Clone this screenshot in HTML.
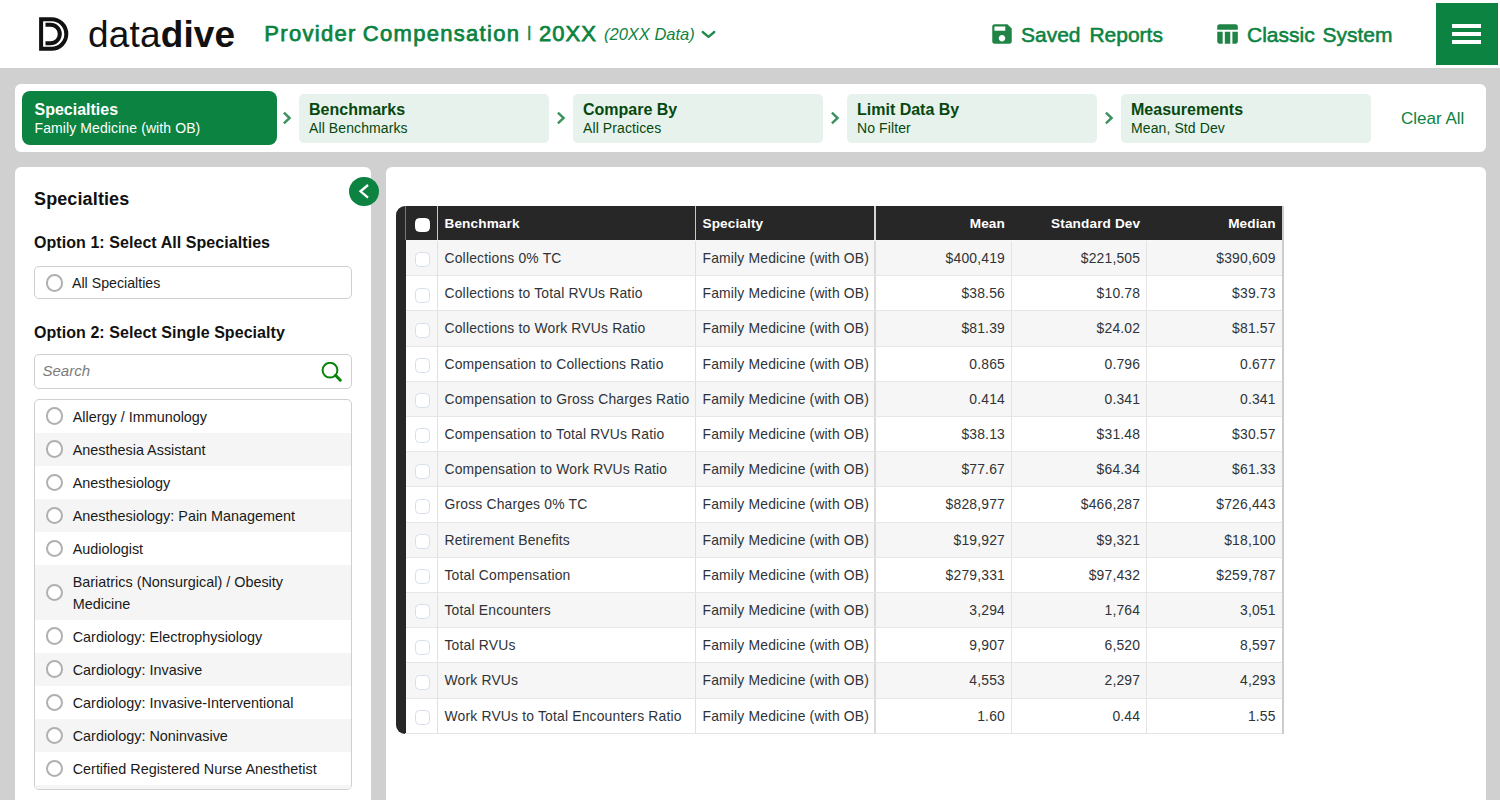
<!DOCTYPE html>
<html lang="en">
<head>
<meta charset="utf-8">
<title>datadive - Provider Compensation</title>
<style>
*{box-sizing:border-box;margin:0;padding:0}
html,body{width:1500px;height:800px;overflow:hidden}
body{background:#d0d0d0;font-family:"Liberation Sans",Arial,sans-serif;color:#222;position:relative}
.abs{position:absolute}
.t{position:absolute;white-space:nowrap;line-height:1}
/* header */
#hdr{position:absolute;left:0;top:0;width:1500px;height:68px;background:#fff}
.g{color:#0c8341}
#burger{position:absolute;left:1436px;top:3px;width:62px;height:62px;background:#0c8341}
#burger i{position:absolute;left:16px;width:29px;height:3.6px;background:#fff}
/* nav */
#nav{position:absolute;left:15px;top:84px;width:1471px;height:68px;background:#fff;border-radius:6px}
.pill{position:absolute;top:10px;width:250px;height:48.5px;background:#e7f2ec;border-radius:5px;color:#06480f}
.pill b{position:absolute;left:10px;top:8px;font-size:16px;line-height:16px;white-space:nowrap}
.pill span{position:absolute;left:10px;top:25.5px;letter-spacing:.1px;font-size:14px;line-height:16px;white-space:nowrap}
.pill.on{left:7px;top:7px;width:255px;height:54px;background:#0c8341;color:#fff;border-radius:8px}
.pill.on b{left:12.5px;top:11px}
.pill.on span{left:12.5px;top:28.5px}
.chev{position:absolute;top:27px;width:9px;height:14px}
/* cards */
#side{position:absolute;left:15px;top:167px;width:356px;height:640px;background:#fff;border-radius:6px}
#main{position:absolute;left:386px;top:167px;width:1100px;height:640px;background:#fff;border-radius:6px}

/* sidebar */
#side h2{letter-spacing:.12px;position:absolute;left:19px;top:19.8px;font-size:18px;line-height:24px;font-weight:bold;color:#111;white-space:nowrap}
#side h3{letter-spacing:.06px;position:absolute;left:19px;font-size:16px;line-height:20px;font-weight:bold;color:#111;white-space:nowrap}
.box{position:absolute;left:19px;width:318px;border:1px solid #cfcfcf;border-radius:5px;background:#fff}
.radio{position:absolute;left:10.8px;width:17.2px;height:17.2px;border-radius:50%;border:2px solid #b0b0b0;background:#fff}
#list{overflow:hidden;top:231.5px;height:391.5px;padding:0}
#list .r{position:relative;padding:7.45px 8px 4.05px 37.7px;font-size:14.4px;line-height:21.6px;color:#1a1a1a;min-height:33px}
#list .r:nth-child(even){background:#f5f5f5}
#list .r .radio{top:50%;margin-top:-8.7px}
#collapse{position:absolute;left:334px;top:9.6px;width:30px;height:29.5px;border-radius:50%;background:#0c8341}

/* table */
#tbl{position:absolute;left:10px;top:39px;width:888px;height:527.6px;background:#272727;border-radius:9px 0 0 9px;overflow:hidden;border-right:2px solid #cdcdcd}
#tbl .hd{position:absolute;left:9px;top:0;right:0;height:34px;color:#fff;font-weight:bold;font-size:13.6px}
#tbl .row{position:absolute;left:9px;right:0;height:35.2px;background:#fff;border-bottom:1px solid #e6e6e6;font-size:13.9px;color:#2f3337}
#tbl .row.o{background:#f6f6f6}
#tbl .c{position:absolute;top:0;bottom:0;white-space:nowrap;line-height:35px;letter-spacing:.18px}
#tbl .hd .c{line-height:35.5px;letter-spacing:.12px}
.c0{left:0;width:31.5px;border-left:1px solid #777}
.row .c0{border-left:1px solid #272727;bottom:-1px !important}
.c1{left:31.5px;width:258.5px;border-left:1px solid #e0e0e0;padding-left:7px}
.c2{left:290px;width:178px;border-left:1px solid #e0e0e0;padding-left:6.5px}
.c3{left:468.7px;width:137.3px;border-left:2.5px solid #dcdcdc;text-align:right;padding-right:6px}
.c4{left:606px;width:135.2px;border-left:1px solid #e4e4e4;text-align:right;padding-right:6px}
.c5{left:741.2px;width:135.8px;border-left:1px solid #e4e4e4;text-align:right;padding-right:6.3px}
.hd .c1,.hd .c2{border-left-color:#c9c9c9}
.hd .c3{border-left-color:#d6d6d6}
.hd .c4,.hd .c5{border-left-color:transparent}
.cb{position:absolute;left:8.5px;top:11.4px;width:15.4px;height:15px;border-radius:4.5px;background:#fff;border:1px solid #d8dee8}
.hd .cb{top:11.5px;left:8.5px;width:15px;height:14.8px;border-color:#fff}
</style>
</head>
<body>
<div id="hdr">
  <svg class="abs" style="left:39px;top:17px" width="30" height="34" viewBox="0 0 30 34">
    <path d="M2.1 2.2H12.5A14.8 14.8 0 0 1 12.5 31.8H2.1Z" fill="none" stroke="#111" stroke-width="4"/>
    <path d="M6.5 7.7H11.5A9.3 9.3 0 0 1 11.5 26.3H6.5" fill="none" stroke="#111" stroke-width="4"/>
  </svg>
  <div class="t" id="logo" style="left:88px;top:14px;font-size:37px;line-height:42px;color:#111;letter-spacing:.15px">data<b>dive</b></div>
  <div class="t g" id="title" style="left:264.3px;top:21px;font-size:22px;line-height:26px;-webkit-text-stroke:.75px #0c8341;letter-spacing:1.3px;word-spacing:-1.2px">Provider Compensation</div>
  <div class="t g" id="bar" style="left:527.2px;top:22px;font-size:15px;line-height:20px;-webkit-text-stroke:.6px #0c8341">|</div>
  <div class="t g" id="yr" style="left:539px;top:21px;font-size:22px;line-height:26px;-webkit-text-stroke:.75px #0c8341;letter-spacing:1.05px">20XX</div>
  <div class="t g" id="yrd" style="left:604px;top:24px;font-size:16.5px;line-height:20px;font-style:italic">(20XX Data)</div>
  <svg class="abs" style="left:701px;top:30px" width="15" height="9" viewBox="0 0 15 9"><path d="M1.7 2L7.5 6.8L13.3 2" fill="none" stroke="#1f8a4c" stroke-width="2.3" stroke-linecap="round" stroke-linejoin="round"/></svg>

  <svg class="abs" style="left:989px;top:21px" width="26" height="26" viewBox="0 0 24 24"><path fill="#1f8444" d="M17 3H5c-1.11 0-2 .9-2 2v14c0 1.1.89 2 2 2h14c1.1 0 2-.9 2-2V7l-4-4zm-5 16c-1.66 0-3-1.34-3-3s1.34-3 3-3 3 1.34 3 3-1.34 3-3 3zm3-10H5V5h10v4z"/></svg>
  <div class="t g" id="saved" style="left:1021px;top:22px;font-size:21px;line-height:26px;word-spacing:3px;-webkit-text-stroke:.55px #0c8341">Saved Reports</div>
  <svg class="abs" style="left:1214px;top:21px" width="26" height="26" viewBox="0 0 24 24"><path fill="#1f8444" d="M10 10.02h5V21h-5zM17 21h3c1.1 0 2-.9 2-2v-9h-5v11zm3-18H5c-1.1 0-2 .9-2 2v3h19V5c0-1.1-.9-2-2-2zM3 19c0 1.1.9 2 2 2h3V10H3v9z"/></svg>
  <div class="t g" id="classic" style="left:1247px;top:22px;font-size:21px;line-height:26px;word-spacing:2px;-webkit-text-stroke:.55px #0c8341">Classic System</div>
  <div id="burger"><i style="top:21.2px"></i><i style="top:29.2px"></i><i style="top:37.2px"></i></div>
</div>

<div id="nav">
  <div class="pill on"><b>Specialties</b><span>Family Medicine (with OB)</span></div>
  <svg class="chev" style="left:268px" viewBox="0 0 9 14"><path d="M0.9 1.7L6.6 7L0.9 12.3" fill="none" stroke="#3c915f" stroke-width="2.4"/></svg>
  <div class="pill" style="left:284px"><b>Benchmarks</b><span>All Benchmarks</span></div>
  <svg class="chev" style="left:542px" viewBox="0 0 9 14"><path d="M0.9 1.7L6.6 7L0.9 12.3" fill="none" stroke="#3c915f" stroke-width="2.4"/></svg>
  <div class="pill" style="left:558px"><b>Compare By</b><span>All Practices</span></div>
  <svg class="chev" style="left:816px" viewBox="0 0 9 14"><path d="M0.9 1.7L6.6 7L0.9 12.3" fill="none" stroke="#3c915f" stroke-width="2.4"/></svg>
  <div class="pill" style="left:832px"><b>Limit Data By</b><span>No Filter</span></div>
  <svg class="chev" style="left:1090px" viewBox="0 0 9 14"><path d="M0.9 1.7L6.6 7L0.9 12.3" fill="none" stroke="#3c915f" stroke-width="2.4"/></svg>
  <div class="pill" style="left:1106px"><b>Measurements</b><span>Mean, Std Dev</span></div>
  <div class="t g" id="clear" style="left:1386px;top:25px;font-size:17px;line-height:20px">Clear All</div>
</div>

<div id="side">

  <h2>Specialties</h2>
  <h3 style="top:65.7px">Option 1: Select All Specialties</h3>
  <div class="box" style="top:98.9px;height:33.6px"><div class="radio" style="top:7.5px"></div><div class="t" id="allspec" style="left:37px;top:8px;font-size:14.2px;line-height:16px;color:#1a1a1a">All Specialties</div></div>
  <h3 style="top:155.5px">Option 2: Select Single Specialty</h3>
  <div class="box" style="top:187.2px;height:34.5px"><div class="t" id="search" style="left:7.5px;top:8px;font-size:15px;line-height:16px;font-style:italic;color:#7b7b7b">Search</div>
    <svg class="abs" style="left:286px;top:7px" width="22" height="21" viewBox="0 0 22 21"><circle cx="9" cy="8.2" r="7.4" fill="none" stroke="#078407" stroke-width="2"/><path d="M14.5 13.3L19.3 18.2" stroke="#078407" stroke-width="3" stroke-linecap="round"/></svg>
  </div>
  <div class="box" id="list">
    <div class="r"><div class="radio"></div>Allergy / Immunology</div>
    <div class="r"><div class="radio"></div>Anesthesia Assistant</div>
    <div class="r"><div class="radio"></div>Anesthesiology</div>
    <div class="r"><div class="radio"></div>Anesthesiology: Pain Management</div>
    <div class="r"><div class="radio"></div>Audiologist</div>
    <div class="r"><div class="radio"></div>Bariatrics (Nonsurgical) / Obesity<br>Medicine</div>
    <div class="r"><div class="radio"></div>Cardiology: Electrophysiology</div>
    <div class="r"><div class="radio"></div>Cardiology: Invasive</div>
    <div class="r"><div class="radio"></div>Cardiology: Invasive-Interventional</div>
    <div class="r"><div class="radio"></div>Cardiology: Noninvasive</div>
    <div class="r"><div class="radio"></div>Certified Registered Nurse Anesthetist</div>
    <div class="r"><div class="radio"></div>&nbsp;</div>
  </div>
  <div id="collapse"><svg class="abs" style="left:8px;top:6.5px" width="14" height="17" viewBox="0 0 14 17"><path d="M11 2L3.5 8.3L11 14.6" fill="none" stroke="#fff" stroke-width="2.3"/></svg></div>

</div>
<div id="main">
<div id="tbl">
<div class="hd"><div class="c c0"><div class="cb"></div></div><div class="c c1">Benchmark</div><div class="c c2">Specialty</div><div class="c c3">Mean</div><div class="c c4">Standard Dev</div><div class="c c5">Median</div></div>
<div class="row o" style="top:34px;height:6px;border:0;border-left:1px solid #272727"></div>
<div class="row o" style="top:35.00px"><div class="c c0"><div class="cb"></div></div><div class="c c1">Collections 0% TC</div><div class="c c2">Family Medicine (with OB)</div><div class="c c3">$400,419</div><div class="c c4">$221,505</div><div class="c c5">$390,609</div></div>
<div class="row" style="top:70.20px"><div class="c c0"><div class="cb"></div></div><div class="c c1">Collections to Total RVUs Ratio</div><div class="c c2">Family Medicine (with OB)</div><div class="c c3">$38.56</div><div class="c c4">$10.78</div><div class="c c5">$39.73</div></div>
<div class="row o" style="top:105.40px"><div class="c c0"><div class="cb"></div></div><div class="c c1">Collections to Work RVUs Ratio</div><div class="c c2">Family Medicine (with OB)</div><div class="c c3">$81.39</div><div class="c c4">$24.02</div><div class="c c5">$81.57</div></div>
<div class="row" style="top:140.60px"><div class="c c0"><div class="cb"></div></div><div class="c c1">Compensation to Collections Ratio</div><div class="c c2">Family Medicine (with OB)</div><div class="c c3">0.865</div><div class="c c4">0.796</div><div class="c c5">0.677</div></div>
<div class="row o" style="top:175.80px"><div class="c c0"><div class="cb"></div></div><div class="c c1">Compensation to Gross Charges Ratio</div><div class="c c2">Family Medicine (with OB)</div><div class="c c3">0.414</div><div class="c c4">0.341</div><div class="c c5">0.341</div></div>
<div class="row" style="top:211.00px"><div class="c c0"><div class="cb"></div></div><div class="c c1">Compensation to Total RVUs Ratio</div><div class="c c2">Family Medicine (with OB)</div><div class="c c3">$38.13</div><div class="c c4">$31.48</div><div class="c c5">$30.57</div></div>
<div class="row o" style="top:246.20px"><div class="c c0"><div class="cb"></div></div><div class="c c1">Compensation to Work RVUs Ratio</div><div class="c c2">Family Medicine (with OB)</div><div class="c c3">$77.67</div><div class="c c4">$64.34</div><div class="c c5">$61.33</div></div>
<div class="row" style="top:281.40px"><div class="c c0"><div class="cb"></div></div><div class="c c1">Gross Charges 0% TC</div><div class="c c2">Family Medicine (with OB)</div><div class="c c3">$828,977</div><div class="c c4">$466,287</div><div class="c c5">$726,443</div></div>
<div class="row o" style="top:316.60px"><div class="c c0"><div class="cb"></div></div><div class="c c1">Retirement Benefits</div><div class="c c2">Family Medicine (with OB)</div><div class="c c3">$19,927</div><div class="c c4">$9,321</div><div class="c c5">$18,100</div></div>
<div class="row" style="top:351.80px"><div class="c c0"><div class="cb"></div></div><div class="c c1">Total Compensation</div><div class="c c2">Family Medicine (with OB)</div><div class="c c3">$279,331</div><div class="c c4">$97,432</div><div class="c c5">$259,787</div></div>
<div class="row o" style="top:387.00px"><div class="c c0"><div class="cb"></div></div><div class="c c1">Total Encounters</div><div class="c c2">Family Medicine (with OB)</div><div class="c c3">3,294</div><div class="c c4">1,764</div><div class="c c5">3,051</div></div>
<div class="row" style="top:422.20px"><div class="c c0"><div class="cb"></div></div><div class="c c1">Total RVUs</div><div class="c c2">Family Medicine (with OB)</div><div class="c c3">9,907</div><div class="c c4">6,520</div><div class="c c5">8,597</div></div>
<div class="row o" style="top:457.40px"><div class="c c0"><div class="cb"></div></div><div class="c c1">Work RVUs</div><div class="c c2">Family Medicine (with OB)</div><div class="c c3">4,553</div><div class="c c4">2,297</div><div class="c c5">4,293</div></div>
<div class="row" style="top:492.60px;height:40px"><div class="c c0"><div class="cb"></div></div><div class="c c1">Work RVUs to Total Encounters Ratio</div><div class="c c2">Family Medicine (with OB)</div><div class="c c3">1.60</div><div class="c c4">0.44</div><div class="c c5">1.55</div></div>
<div style="position:absolute;left:9px;right:0;bottom:0;height:1px;background:#e4e4e4;z-index:3"></div>
</div>
</div>
</body>
</html>
